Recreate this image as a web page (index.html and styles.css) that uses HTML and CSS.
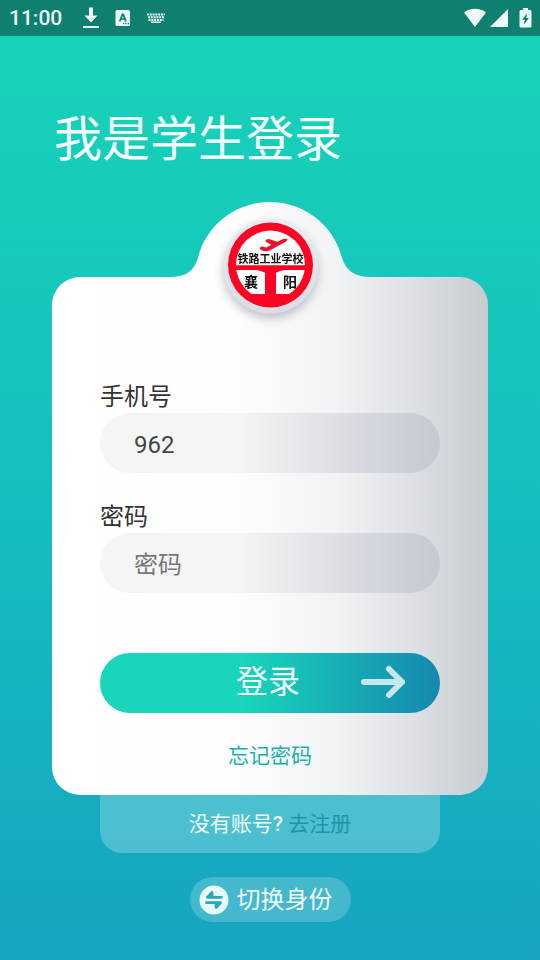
FILE: index.html
```html
<!DOCTYPE html>
<html lang="zh-CN">
<head>
<meta charset="utf-8">
<meta name="viewport" content="width=device-width, initial-scale=1">
<title>我是学生登录</title>
<link rel="stylesheet" href="styles.css">
</head>
<body>
<header class="status">
  <div class="status-group">
    <span class="clock">11:00</span>
    <svg class="ic-download" width="16" height="22" viewBox="0 0 16 22" aria-hidden="true"><path d="M6 0.500h4v8h4.500L8 15.500 1.500 8.500H6zM0 19h16v2H0z"/></svg>
    <svg class="ic-app" width="16" height="18" viewBox="0 0 16 18" aria-hidden="true"><path fill-rule="evenodd" d="M2 1h11.500a1.500 1.500 0 0 1 1.500 1.500V15.500a1.500 1.500 0 0 1-1.500 1.500H2A1.500 1.500 0 0 1 .5 15.500V2.500A1.500 1.500 0 0 1 2 1zM6.800 4.500L3.800 12.500h2l.6-1.700h2.900l.6 1.700h2L8.900 4.500zm1 2.300l.9 2.500H7zM8 14v1.300h1.300V14zm2.300 0v1.300h1.300V14zm2.300 0v1.300H14V14z"/></svg>
    <svg class="ic-keys" width="20" height="12" viewBox="0 0 20 12" aria-hidden="true"><path d="M1 2.500h18M2 5.300h16M2.500 8h15" fill="none" stroke="currentColor" stroke-width="2" stroke-dasharray="2 .8"/><path d="M5 9.500h10v1.500H5z"/></svg>
  </div>
  <div class="status-group">
    <svg width="24" height="20" viewBox="0 0 24 20" aria-hidden="true"><path d="M1 4.500C7-.5 17-.5 23 4.500L12 19z"/></svg>
    <svg width="20" height="20" viewBox="0 0 20 20" aria-hidden="true"><path d="M19 1v18H1z"/></svg>
    <svg class="ic-battery" width="13" height="20" viewBox="0 0 13 20" aria-hidden="true"><path fill-rule="evenodd" d="M4 0h5v2h2q1.500 0 1.500 1.500V18q0 1.500-1.500 1.500H2Q.5 19.500.5 18V3.500Q.5 2 2 2h2zM8 5.200L3.200 11.800h2.500L5 16.800l4.800-6.900H7.300z"/></svg>
  </div>
</header>
<main class="page">
  <h1 class="title">我是学生登录</h1>
  <form class="card">
    <div class="crest">
      <svg class="bump" width="200" height="76" viewBox="0 0 200 76" aria-hidden="true">
        <defs><linearGradient id="sheet" gradientUnits="userSpaceOnUse" x1="-118" y1="0" x2="318" y2="0">
          <stop offset="0" stop-color="#fff"/><stop offset=".4" stop-color="#fefefe"/><stop offset=".65" stop-color="#f2f3f5"/><stop offset=".85" stop-color="#dadee3"/><stop offset="1" stop-color="#c6cbd0"/>
        </linearGradient></defs>
        <path fill="url(#sheet)" d="M0 76V75C16 75 24 69 28 56C36 23 66 0 100 0S164 23 172 56C176 69 186 75 200 75V76z"/>
      </svg>
      <svg class="logo" width="100" height="100" viewBox="0 0 100 100" role="img" aria-label="襄阳铁路工业学校">
        <defs><clipPath id="inner"><circle cx="50.500" cy="49" r="34.500"/></clipPath>
        <linearGradient id="rim" x1="0" y1="0" x2="0" y2="1"><stop offset="0" stop-color="#ebecee"/><stop offset="1" stop-color="#dadde2"/></linearGradient></defs>
        <circle cx="50.500" cy="50" r="47.500" fill="url(#rim)"/>
        <circle cx="50.500" cy="49" r="42.500" fill="#fc0525"/>
        <path clip-path="url(#inner)" fill="#fff" d="M10 10h80v39.300H10zM10 54H36Q41 54.500 45 56.700V78H10zM90 54H65Q60 54.500 56 56.700V78H90z"/>
        <path fill="#e8142e" d="M39.800 31.500l2.500-1 4 1 5-2.700-6-3.200 1-2 2.500-.5 8.700 2.700 5.500-2.800q4.200-.9 4.600.5-.3 1.500-3.200 2.900l-6.600 3.600-8 4.600q-3.500 1.200-7 .2-3-.7-3-3.300z"/>
        <text class="school" x="50.500" y="47" text-anchor="middle">铁路工业学校</text>
        <text class="city" x="24" y="71">襄</text>
        <text class="city" x="63" y="71">阳</text>
      </svg>
    </div>
    <label class="label" for="phone">手机号</label>
    <input class="field" id="phone" type="text" inputmode="tel" value="962">
    <label class="label" for="password">密码</label>
    <input class="field" id="password" type="password" placeholder="密码">
    <button class="submit" type="submit">登录
      <svg class="arrow" width="46" height="34" viewBox="0 0 46 34" aria-hidden="true"><path d="M4 17H42M29 4L42 17L29 30"/></svg>
    </button>
    <a class="forgot" href="#forgot">忘记密码</a>
  </form>
  <p class="register">没有账号<b>?</b> <a href="#register">去注册</a></p>
  <button class="switch" type="button">
    <svg width="30" height="30" viewBox="0 0 30 30" aria-hidden="true"><circle cx="15" cy="15" r="14.500" fill="#e8fafc"/><path d="M22.500 12.300H8.500L13 7.500V12M7.500 17.700H21.500L17 22.500V18" fill="none" stroke="#27a7b9" stroke-width="2.800" stroke-linecap="round" stroke-linejoin="round"/></svg>
    <span class="switch-text">切换身份</span>
  </button>
</main>
</body>
</html>
```
FILE: styles.css
```css
* {
  box-sizing: border-box;
}

body {
  margin: 0;
  min-height: 100vh;
  font-family: Roboto, "Noto Sans CJK SC", sans-serif;
  background: linear-gradient(180deg, #18d2b8 4%, #16cabb 25%, #15bfbe 50%, #16a4c1 100%);
}

svg {
  display: block;
  fill: currentColor;
}

.status {
  display: flex;
  align-items: center;
  justify-content: space-between;
  height: 36px;
  padding: 0 8px 0 9px;
  color: #eefaf8;
  background: #0f806f;
}

.status-group {
  display: flex;
  align-items: center;
  gap: 2px;
}

.clock {
  font-size: 21px;
  font-weight: 500;
}

.ic-download {
  margin-left: 19px;
}

.ic-app {
  margin-left: 14px;
}

.ic-keys {
  margin-left: 13px;
}

.ic-battery {
  margin-left: 8px;
}

.page {
  display: flex;
  flex-direction: column;
  align-items: stretch;
  max-width: 540px;
  margin: 0 auto;
  padding: 68px 52px 38px;
}

.title {
  margin: 0 0 101px;
  padding-left: 2px;
  font-size: 48px;
  font-weight: 400;
  line-height: 72px;
  color: #f4fffd;
}

.card {
  position: relative;
  display: flex;
  flex-direction: column;
  padding: 104px 48px 24px;
  border-radius: 28px;
  background: linear-gradient(90deg, #fff 0%, #fefefe 40%, #f2f3f5 65%, #dadee3 85%, #c6cbd0 100%);
}

.crest {
  position: absolute;
  top: -75px;
  left: 50%;
  width: 200px;
  margin-left: -100px;
}

.logo {
  position: absolute;
  top: 14px;
  left: 50px;
  filter: drop-shadow(0 5px 5px rgba(120, 128, 150, 0.45));
}

.school {
  font-family: "Noto Sans CJK SC", sans-serif;
  font-size: 11px;
  font-weight: 700;
  fill: #111;
}

.city {
  font-family: "Noto Sans CJK SC", sans-serif;
  font-size: 14px;
  font-weight: 700;
  fill: #111;
}

.label {
  font-size: 24px;
  line-height: 32px;
  color: #333;
}

.field {
  width: 100%;
  height: 60px;
  margin: 0 0 28px;
  padding: 4px 34px 0;
  border: 0;
  border-radius: 30px;
  font: inherit;
  font-size: 24px;
  color: #444;
  background: linear-gradient(90deg, #f5f5f5 0%, #f5f5f5 40%, #d5d9df 78%, #c4c8cf 100%);
}

.field::placeholder {
  color: #777;
  opacity: 1;
}

.submit {
  position: relative;
  height: 60px;
  margin-top: 32px;
  padding: 0 4px 8px 0;
  border: 0;
  border-radius: 30px;
  font: inherit;
  font-size: 32px;
  color: #f0fffc;
  background: linear-gradient(90deg, #18d5bb 0%, #18d5bb 42%, #16a9b4 75%, #1588b0 100%);
}

.arrow {
  position: absolute;
  top: 12px;
  right: 34px;
  fill: none;
  stroke: #c5e8ed;
  stroke-width: 6px;
  stroke-linecap: round;
  stroke-linejoin: round;
}

.forgot {
  align-self: center;
  margin-top: 28px;
  font-size: 21px;
  line-height: 30px;
  color: #1bb0b0;
  text-decoration: none;
}

.register {
  margin: 0 48px 24px;
  padding: 14px 0;
  border-radius: 0 0 22px 22px;
  font-size: 21px;
  line-height: 30px;
  text-align: center;
  color: #f0fcfd;
  background: rgba(255, 255, 255, 0.24);
}

.register b {
  font-weight: 500;
}

.register a {
  color: #1f93aa;
  text-decoration: none;
}

.switch {
  display: flex;
  align-items: center;
  align-self: center;
  gap: 8px;
  height: 45px;
  padding: 0 18px 0 9px;
  border: 0;
  border-radius: 23px;
  font: inherit;
  font-size: 24px;
  color: #f0fcfd;
  background: rgba(255, 255, 255, 0.2);
}

.switch-text {
  padding-bottom: 4px;
}
```
